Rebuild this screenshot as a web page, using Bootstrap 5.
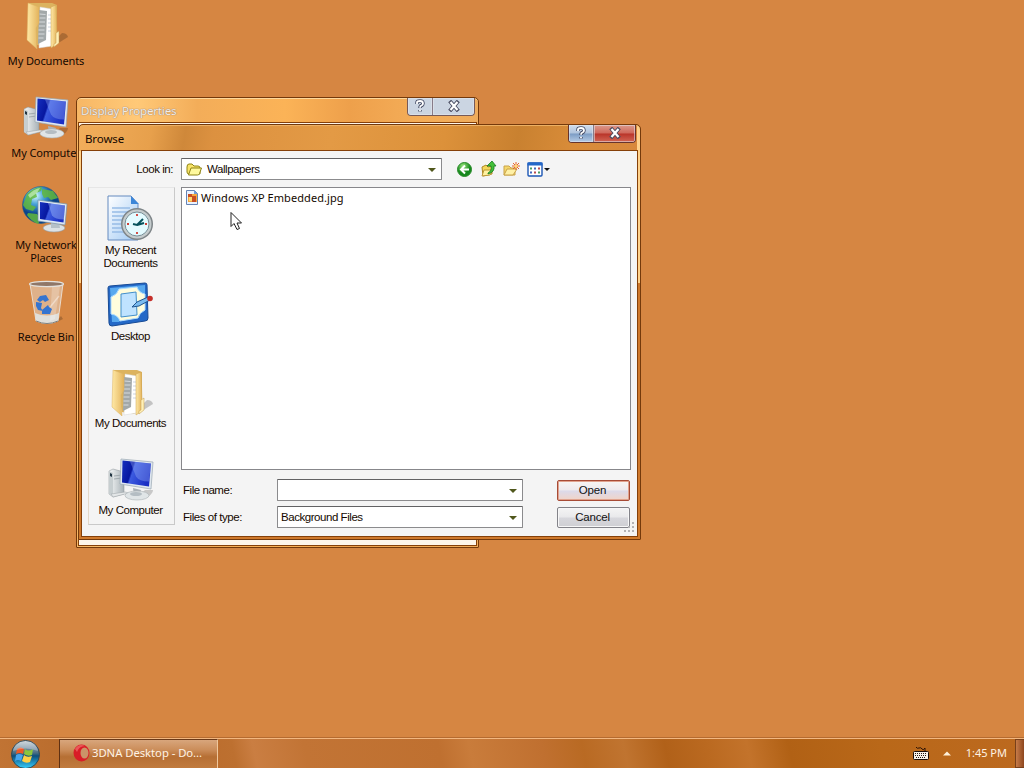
<!DOCTYPE html>
<html lang="en">
<head>
    <meta charset="UTF-8">
    <title>Browse</title>
    <link href="https://cdn.jsdelivr.net/npm/bootstrap@5.3.2/dist/css/bootstrap.min.css" rel="stylesheet">
    <style>
        body { width: 1024px; height: 768px; background: #d68642; font: 11px/13px "Noto Sans", sans-serif; color: #140800; }
        svg { display: block; flex: none; }
        .desktop-icons { width: 90px; padding-top: 2px; }
        .shortcut { width: 92px; text-align: center; letter-spacing: -.12px; }
        .shortcut svg { margin: 0 auto 4px; }

        .xp-window { position: absolute; border: 1px solid #74390b; border-radius: 5px 5px 1px 1px; display: flex; flex-direction: column; }
        .xp-title { display: flex; justify-content: space-between; align-items: flex-start; flex: none; }
        .xp-client { flex: 1; border: 1px solid #854009; }
        #displayProps { left: 76px; top: 97px; width: 403px; height: 451px; padding: 0 1px 1px; box-shadow: inset 0 1px #ffd79a;
            background: linear-gradient(90deg, #f7b765, #ffc978 15%, #f3ad59 30%, #fbb357 52%, #eea04b 68%, #f4ad58 85%, #efac5c); }
        #displayProps .xp-title { height: 24px; padding-left: 3px; color: #f3ece6; text-shadow: 0 0 1px #8d7668, 0 0 1px #a08b7b; font-size: 11.5px; letter-spacing: -.15px; }
        #displayProps .title-text { padding-top: 6px; }
        #displayProps .xp-client { background: #fdf5ea; }
        #browse { left: 78px; top: 124px; width: 563px; height: 416px; padding: 0 2px 2px; box-shadow: inset 0 1px #edb063;
            background: linear-gradient(90deg, transparent 3px, transparent 558px, #ffd28b 558px) 0 0/100% 158px no-repeat, linear-gradient(90deg, #ffd28b 3px, transparent 3px) 0 26px/100% 132px no-repeat,
            linear-gradient(100deg, #f2ae5b, #e7a04c 13%, #cf883a 19%, #dc9140 24%, #e39a45 45%, #dc913a 65%, #c98130 78%, #d98c39 88%, #d8883c) 0 0/100% 27px no-repeat, #cf792c; }
        #browse .xp-title { height: 25px; padding-left: 4px; font-size: 11.5px; letter-spacing: -.1px; }
        #browse .xp-client { background: #f4f4f4; font: 11.5px/13px "Liberation Sans", sans-serif; letter-spacing: -.45px; padding: 6px 5px 0 6px; }
        .title-text { padding-top: 7px; }

        .caption-btns { display: flex; height: 18px; border: 1px solid #765a59; border-top: 0; border-radius: 0 0 4px 4px; overflow: hidden; margin-right: 2px; background: #cbd5e2; }
        .caption-btns span { display: flex; align-items: center; justify-content: center; width: 25px; padding-bottom: 1px; border-right: 1px solid #877b88; box-shadow: inset 0 0 0 1px #e4e8ef88; }
        .caption-btns span:last-child { width: 41px; border: 0; }
        #browse .caption-btns { border-color: #67342c; }
        #browse .caption-btns span { background: linear-gradient(#d1dded, #afc3dc 48%, #7c9cc4 52%, #b5cbe5); }
        #browse .caption-btns span:last-child { background: linear-gradient(#dc9a8c, #cf675a 48%, #b93429 52%, #d26655); }

        .look-row { height: 30px; }
        .look-label { width: 93px; text-align: right; padding: 6px 8px 0 0; }
        .combo { display: flex; align-items: center; background: #fff; border: 1px solid #8b8b8d; border-top-color: #626264; border-radius: 1px; height: 22px; padding: 1px 5px 0 3px; }
        .look-row .combo { margin-top: 1px; }
        .combo i { margin-left: auto; border: 4px solid transparent; border-top: 4px solid #50571c; border-bottom: 0; }
        .places { width: 87px; height: 338px; border: 1px solid #c9c9c9; border-left-color: #e3d9ca; border-top-color: #e6e6e6; text-align: center; padding: 4px 2px 0 0; }
        .place { display: flow-root; height: 87px; }
        .place svg { margin: 2px auto 1px; }
        .place:first-child svg { margin: 1px auto; }
        .right-pane { width: 450px; margin-left: 6px; }
        .file-list { height: 283px; border: 1px solid #87878b; background: #fff; padding: 2px 3px; font: 11px/15px "Noto Sans", sans-serif; letter-spacing: .07px; }
        .field-label { width: 96px; padding: 1px 0 0 2px; }
        .dlg-btn { width: 73px; height: 21px; border: 1px solid #838389; border-radius: 2px; background: linear-gradient(#f4f4f4, #e9e9eb 48%, #d7d7dc 52%, #cfcfd3); box-shadow: inset 0 0 0 1px #f7f7f7; margin-left: 34px; padding: 1px 2px 0 0; font: inherit; letter-spacing: -.2px; color: #111; }
        .dlg-btn.is-default { border-color: #a74b36; box-shadow: inset 0 0 0 1px #e1a38e; background: linear-gradient(#f7f5f3, #eee9ec 48%, #dcdaea 52%, #f1d4c8); }

        .taskbar { height: 30px; border-top: 1px solid #f3b780; box-shadow: 0 -1px #b56b30;
            background: linear-gradient(78deg, #c17434, #b86b2c 8%, #bb6d2d 20%, #bd7030 23%, #ca7e42 25%, #c27435 30%, #bf7030 43%, #c97c3b 46%, #c07030 53%, #b96a23 57%, #c07430 61%, #b16119 65%, #ba6920 69%, #c3732b 73%, #b16115 77%, #b96819 86%, #bc691f); color: #fff3e4; }
        .task-btn { width: 159px; height: 30px; margin-left: 18px; padding: 0 0 2px 13px; border: 1px solid #efc79c; border-left-color: #5f3012; border-top-color: #693817; background: linear-gradient(#d8a67c, #cb8d5a 35%, #b66f34 60%, #c17b3e); font-size: 11.3px; letter-spacing: -.05px; }
        .show-desktop { width: 9px; height: 29px; border: 1px solid #78401a; border-right: 0; background: linear-gradient(90deg, #c77c49, #8e461e); }
        .cursor { position: absolute; left: 230px; top: 211px; }
    </style>
</head>
<body class="position-relative overflow-hidden d-flex flex-column justify-content-between">

<!-- shared icons -->
<svg width="0" height="0" class="position-absolute">
    <defs>
        <linearGradient id="gFolder" x2="1"><stop stop-color="#ffe9a6"/><stop offset="1" stop-color="#e3b35c"/></linearGradient>
        <linearGradient id="gScreen" x2="1" y2=".3"><stop stop-color="#1630bf"/><stop offset=".4" stop-color="#0717a0"/><stop offset=".46" stop-color="#3c5be0"/><stop offset="1" stop-color="#1a2fc4"/></linearGradient>
        <linearGradient id="gMetal" x2="1"><stop stop-color="#f6f8f8"/><stop offset="1" stop-color="#a8b1b6"/></linearGradient>
        <linearGradient id="gPaper" x2="1" y2="1"><stop stop-color="#fff"/><stop offset="1" stop-color="#9fc9f4"/></linearGradient>
        <radialGradient id="gGlobe" cx=".35" cy=".25"><stop stop-color="#d8fbff"/><stop offset=".45" stop-color="#48a3d8"/><stop offset="1" stop-color="#0b438b"/></radialGradient>
        <radialGradient id="gGreen" cx=".4" cy=".25"><stop stop-color="#9ae77e"/><stop offset="1" stop-color="#16881d"/></radialGradient>
        <linearGradient id="gOrb" y2="1" x2="0"><stop stop-color="#bfcad0"/><stop offset=".45" stop-color="#476b82"/><stop offset=".55" stop-color="#0c4e7c"/><stop offset="1" stop-color="#38d2ff"/></linearGradient>
    </defs>
    <symbol id="icoDocs" viewBox="0 0 48 48">
        <path d="M30 45l16-10q-1-4-6-4l-8 8z" fill="#000" opacity=".2"/>
        <path d="M7 1h23l5 2v35l-8 7-12-2z" fill="#dcb35f"/>
        <path d="M18 5l12 2v37l-13 2z" fill="#fff" stroke="#d4d5d5" stroke-width=".5"/>
        <path d="M17 8l8 1-1 29-8 4z" fill="#a2a8a9"/>
        <path d="M17.500 12l6 .5m-6 3.500h6m-6.500 4h6m-6 4h6m-6.500 4h6m-6 4h6m-6 4h5" stroke="#d6dadc"/>
        <path d="M26 13h3m-3 4h3m-3 4h3m-3 4h3m-3 4h3" stroke="#cbd3df"/>
        <path d="M6 1l11 4v16l-3 5 1 21-10-9z" fill="url(#gFolder)" stroke="#dcb360" stroke-width=".5"/>
        <path d="M29 5l5-2 1 28v11l-6 4z" fill="url(#gFolder)" stroke="#cda14f" stroke-width=".5"/>
        <path d="M34 31l3-2v12l-5 4v-3l2-1z" fill="#fff0b7" stroke="#c09a4c" stroke-width=".5"/>
    </symbol>
    <symbol id="icoPc" viewBox="0 0 48 48">
        <path d="M28 41c8 3 17-3 17-8l-8 0z" fill="#000" opacity=".18"/>
        <path d="M1 14l4-2 11 3v22L5 40l-4-3z" fill="url(#gMetal)" stroke="#8b9297" stroke-width=".5"/>
        <path d="M1 14l4 2v23l-4-2z" fill="#c7ced0"/><path d="M2 16l2 1v3l-2-1z" fill="#203441"/>
        <path d="M6 19l8-1M6 22l8-1" stroke="#a0a9ad"/>
        <path d="M3 37l14-2 4 1-16 4z" fill="#e4e7e8" stroke="#9ba1a4" stroke-width=".5"/>
        <path d="M25 31l8 2-2 6h-5z" fill="#aab2b8"/>
        <ellipse cx="29" cy="38.500" rx="12" ry="4.500" fill="#e0e5e7" stroke="#a9b0b4" stroke-width=".6"/>
        <ellipse cx="28" cy="37" rx="6" ry="2" fill="#b4bdc3"/>
        <path d="M13 2l32 3-2 27-31-5z" fill="#dfe7ef" stroke="#9aa7b2" stroke-width=".7"/>
        <path d="M14.500 3.500L43 6.500 41 29.500l-27-4z" fill="url(#gScreen)"/>
        <path d="M22 4.500l21 2-2 18q-10 0-13-5z" fill="#a7c1ff" opacity=".32"/>
    </symbol>
    <symbol id="icoNet" viewBox="0 0 48 48">
        <circle cx="21" cy="19" r="18.500" fill="url(#gGlobe)" stroke="#195a83" stroke-width=".5"/>
        <path d="M7 8Q14 1 22 1l-1 4-5 2 1 4-5 2-1 6 5 2-3 4-7-2-3-4zM22 3l11 2 5 7-7 2-3-3-4 1-2-4zM8 27l9 1 4 5-3 5Q11 35 7 29z" fill="#61b83c" opacity=".85"/>
        <path d="M8 9Q14 3 20 2l-3 5-7 5z" fill="#d9f9cc" opacity=".6"/>
        <ellipse cx="34" cy="42" rx="11" ry="4" fill="#dce2e5" stroke="#929aa0" stroke-width=".6"/>
        <path d="M31 36h8l1 6h-9z" fill="#b6c1c8"/>
        <path d="M18 14l29 4-2 21-27-4z" fill="#dce8f3" stroke="#7890a5" stroke-width=".7"/>
        <path d="M20 16l25 3.500-1.500 17-23.500-3.500z" fill="url(#gScreen)"/>
        <path d="M28 17l17 2.500-1 14q-9 0-12-4z" fill="#b0caff" opacity=".4"/>
    </symbol>
    <symbol id="icoBin" viewBox="0 0 48 48">
        <path d="M33 45l8-4-2-3z" fill="#000" opacity=".2"/>
        <path d="M8 6h33l-5 37q-11 5-22 0z" fill="#e5d5c6" fill-opacity=".55" stroke="#eceae6" stroke-width=".8"/>
        <path d="M13 35q12 5 24 0l-1 8q-11 5-22 0z" fill="#e0e7e8" opacity=".85"/>
        <path d="M30 8h8l-5 33-5 2z" fill="#fff" opacity=".22"/>
        <path d="M37 18L25 33" stroke="#fff" stroke-width="1.400" opacity=".4"/>
        <ellipse cx="24.500" cy="6" rx="17" ry="2.600" fill="#8f7768" stroke="#e4e2dd" stroke-width="1.200"/>
        <path d="M18 18l6-1 3 5-4 2-2-2-3 2-3-2zM14 24l6 1-1 5 2 3-5-1-2-4zM20 32l6-5 1 2 3 2-2 5-8 0z" fill="#3474d0"/>
        <path d="M14 43q11 5 22 0" fill="none" stroke="#7e7f7d"/>
    </symbol>
    <symbol id="icoFolderSm" viewBox="0 0 16 16">
        <path d="M1 5q0-3 2-3h3l2 2h4q2 0 2 2v6H3q-2 0-2-2z" fill="#f9e469" stroke="#8f8415"/>
        <path d="M5 6h10.500l-2 5.500q-.5 1.500-2 1.500H2.500z" fill="#fff99d" stroke="#8f8415"/>
    </symbol>
    <!-- caption button glyphs -->
    <symbol id="glyphHelp" viewBox="0 0 12 14">
        <path d="M3 5V3.500Q3 2 6 2t3 2.500Q9 6 7.500 6.500T6 9M6 11v1.500" fill="none" stroke="#444b64" stroke-width="3.500"/>
        <path d="M3 5V3.500Q3 2 6 2t3 2.500Q9 6 7.500 6.500T6 8.700M6 10.800v1.500" fill="none" stroke="#fff" stroke-width="1.800"/>
    </symbol>
    <symbol id="glyphClose" viewBox="0 0 14 12">
        <path d="M4 2.500l6 7m0-7l-6 7" stroke="#4b4d62" stroke-width="4" stroke-linecap="square"/>
        <path d="M3.500 2l7 8m0-8l-7 8" stroke="#fff" stroke-width="2.200"/>
    </symbol>
</svg>

<div class="desktop-icons">
    <div class="shortcut" style="height: 92px"><svg width="48" height="48"><use href="#icoDocs"/></svg>My Documents</div>
    <div class="shortcut" style="height: 92px"><svg width="48" height="48"><use href="#icoPc" x="1" y="1"/></svg>My Computer</div>
    <div class="shortcut" style="height: 92px"><svg width="48" height="48"><use href="#icoNet" x="-2"/></svg>My Network<br>Places</div>
    <div class="shortcut"><svg width="48" height="48"><use href="#icoBin"/></svg>Recycle Bin</div>
</div>

<div class="xp-window" id="displayProps">
    <div class="xp-title">
        <span class="title-text">Display Properties</span>
        <div class="caption-btns">
            <span><svg width="12" height="14"><use href="#glyphHelp"/></svg></span>
            <span><svg width="14" height="12"><use href="#glyphClose"/></svg></span>
        </div>
    </div>
    <div class="xp-client"></div>
</div>

<div class="xp-window" id="browse">
    <div class="xp-title">
        <span class="title-text">Browse</span>
        <div class="caption-btns">
            <span><svg width="12" height="14"><use href="#glyphHelp"/></svg></span>
            <span><svg width="14" height="12"><use href="#glyphClose"/></svg></span>
        </div>
    </div>
    <div class="xp-client">
        <div class="look-row d-flex">
            <div class="look-label">Look in:</div>
            <div class="combo" style="width: 261px">
                <svg class="me-1" width="18" height="16"><use href="#icoFolderSm" x="1" width="16" height="16"/></svg>Wallpapers<i></i>
            </div>
            <div class="d-flex" style="padding: 4px 0 0 14px; gap: 6.5px">
                <svg width="17" height="16" viewBox="0 0 17 16"><circle cx="8.500" cy="8.500" r="7" fill="url(#gGreen)" stroke="#2a8c2a"/><path d="M13 8.500H5m4-4l-4 4 4 4" fill="none" stroke="#fff" stroke-width="2"/></svg>
                <svg width="17" height="16" viewBox="0 0 17 16"><path d="M2 6l4-2 2 2 4-1v8l-9 2z" fill="#f4d85a" stroke="#ae8726"/><path d="M2 15l2-6h9l-3 5z" fill="#fff1a0" stroke="#ba9737"/><path d="M8 12q4-2 3-7H7l5-5 4 5h-2q1 6-6 8z" fill="#43bf38" stroke="#177a21" stroke-width=".8"/></svg>
                <svg width="17" height="16" viewBox="0 0 17 16"><path d="M1 5h5l2 2h4v7H1z" fill="#f5d76b" stroke="#c9a34a"/><path d="M1 14l3-6h10l-4 6z" fill="#fff1a6" stroke="#c9a34a"/><path d="M13 1v8M9 5h8M10 2l6 6m0-6l-6 6" stroke="#e7652c"/><circle cx="13" cy="5" r="1.500" fill="#ffdc72"/></svg>
                <svg width="24" height="16" viewBox="0 0 24 16"><rect x="1" y="2" width="14" height="13" rx="1" fill="#fff" stroke="#1b56b4" stroke-width="1.400"/><path d="M.5 1.500h15v3H.5z" fill="#2367c8"/><path d="M3 6.500h2v2H3zm8 4h2v2h-2z" fill="#4a9b62"/><path d="M7 6.500h2v2H7zm-4 4h2v2H3z" fill="#4169bd"/><path d="M11 6.500h2v2h-2zm-4 4h2v2H7z" fill="#b94c4f"/><path d="M17 7h6l-3 3z" fill="#111"/></svg>
            </div>
        </div>
        <div class="d-flex">
            <div class="places">
                <div class="place">
                    <svg width="48" height="50" viewBox="0 0 48 50"><path d="M1 3h23l7 8v36H1z" fill="url(#gPaper)" stroke="#648abf"/><path d="M24 3v8h8z" fill="#3c86d8"/><path d="M5 15h18M5 19h16M5 23h12M5 27h10M5 31h9M5 35h10M5 39h12" stroke="#97bce6" stroke-width="1.500"/><circle cx="30" cy="31" r="16" fill="#7e8588"/><circle cx="30" cy="31" r="14.500" fill="#c5cccd"/><circle cx="30" cy="31" r="12" fill="#e4fbff" stroke="#788f98"/><path d="M30 21v2m0 16v2m-10-10h2m16 0h2" stroke="#cf3e35" stroke-width="1.800"/><path d="M36 26l-6 6-4-1m4 1l7-2" fill="none" stroke="#07525c" stroke-width="2"/></svg>
                    My Recent<br>Documents
                </div>
                <div class="place">
                    <svg width="48" height="48" viewBox="0 0 48 48"><path d="M1 7q0-2 2-2l35-3q2 0 2 2l1 33q0 3-3 3L5 45q-3 0-3-3z" fill="#2368c7" stroke="#174a94"/><path d="M3 7l35-3v8L12 41H5z" fill="#58a9ef"/><path d="M12 8l18-2q2 6 8 7v16q-6 3-7 8l-18 3q-2-6-9-7V16q6-2 8-8z" fill="#fffddd" stroke="#afdcff"/><path d="M14 13l15-2 1 23-16 2z" fill="#bfe3ff" stroke="#438fca"/><path d="M41 16L30 21l-5 5 7-1 11-6z" fill="#7bbcf0" stroke="#20558f"/><circle cx="43" cy="17.500" r="2.800" fill="#c52e29"/></svg>
                    Desktop
                </div>
                <div class="place"><svg width="48" height="48"><use href="#icoDocs" y="1"/></svg>My Documents</div>
                <div class="place"><svg width="48" height="48"><use href="#icoPc" x="1" y="2"/></svg>My Computer</div>
            </div>
            <div class="right-pane">
                <div class="file-list d-flex align-items-start">
                    <svg width="16" height="16" viewBox="0 0 16 16"><path d="M1.500.5h8l3 3v11h-11z" fill="#e9f2ff" stroke="#6684b5"/><path d="M9 0v4h4z" fill="#719bd6"/><path d="M3 4h9v8H3z" fill="#f7a83d"/><path d="M3 4h4v3H3zM7 6h4v6H7z" fill="#c94d22"/><path d="M4 7h3v4H4z" fill="#ffda71"/></svg>
                    <span>Windows XP Embedded.jpg</span>
                </div>
                <div class="d-flex align-items-center" style="margin-top: 9px">
                    <div class="field-label">File name:</div>
                    <div class="combo" style="width: 246px"><i></i></div>
                    <button class="dlg-btn is-default">Open</button>
                </div>
                <div class="d-flex align-items-center" style="margin-top: 5px">
                    <div class="field-label">Files of type:</div>
                    <div class="combo" style="width: 246px">Background Files<i></i></div>
                    <button class="dlg-btn">Cancel</button>
                </div>
                <div class="d-flex justify-content-end">
                    <svg width="12" height="11" viewBox="0 0 12 11" style="margin: -6px -4px 0 0"><path d="M9 0h2v2H9zM5 4h2v2H5zM9 4h2v2H9zM1 8h2v2H1zM5 8h2v2H5zM9 8h2v2H9z" fill="#b3b3b5"/></svg>
                </div>
            </div>
        </div>
    </div>
</div>

<svg class="cursor" width="13" height="20" viewBox="0 0 13 20"><path d="M1 1.500v14l3-3 3 6 2.500-1L7 12h4.500z" fill="#fff" stroke="#222"/></svg>

<div class="taskbar d-flex align-items-center">
    <svg width="30" height="29" viewBox="0 0 30 29" style="margin-left: 11px">
        <circle cx="14.500" cy="15.500" r="14" fill="url(#gOrb)" stroke="#314854"/>
        <path d="M6 10q4-3 7 0l-1 5q-3-2-7 0z" fill="#ee5926"/><path d="M14 10q3 3 8 0l-1 6q-4 2-8-1z" fill="#8cc63c"/>
        <path d="M5 16q3-2 7 0l-2 6q-3-2-6 0z" fill="#47a5ed"/><path d="M13 16q3 3 8 1l-2 6q-4 2-8-1z" fill="#ffd044"/>
        <path d="M2 12Q4 2 14.500 2T27 12q-12-5-25 0z" fill="#fff" opacity=".28"/>
    </svg>
    <div class="task-btn d-flex align-items-center">
        <svg width="19" height="18" viewBox="0 0 19 18"><ellipse cx="8.500" cy="9" rx="8" ry="8.500" fill="#d91d27"/><ellipse cx="11.500" cy="9" rx="4" ry="5.500" fill="#cb9468"/><path d="M2 5Q6-1 12 2 6 2 4 8z" fill="#f77d78" opacity=".6"/></svg>
        <span>3DNA Desktop - Do...</span>
    </div>
    <div class="d-flex align-items-center ms-auto">
        <svg width="16" height="14" viewBox="0 0 16 14"><path d="M3 0q1 2 3 1t3 1 3-1v3" fill="none" stroke="#2c1408"/><rect x=".5" y="4.500" width="15" height="8" rx="1" fill="#f7f1e9" stroke="#1e0f08"/><path d="M2 6.500h12M2 8.500h12M3 10.500h10" stroke="#26170f" stroke-dasharray="1 1"/></svg>
        <svg width="8" height="5" viewBox="0 0 8 5" style="margin: 0 15px 0 14px"><path d="M0 4.500l4-4 4 4z" fill="#fff0d8"/></svg>
        <span style="margin: 0 8px 2px 0">1:45 PM</span>
        <div class="show-desktop"></div>
    </div>
</div>

<script src="https://cdn.jsdelivr.net/npm/bootstrap@5.3.2/dist/js/bootstrap.bundle.min.js"></script>
</body>
</html>
